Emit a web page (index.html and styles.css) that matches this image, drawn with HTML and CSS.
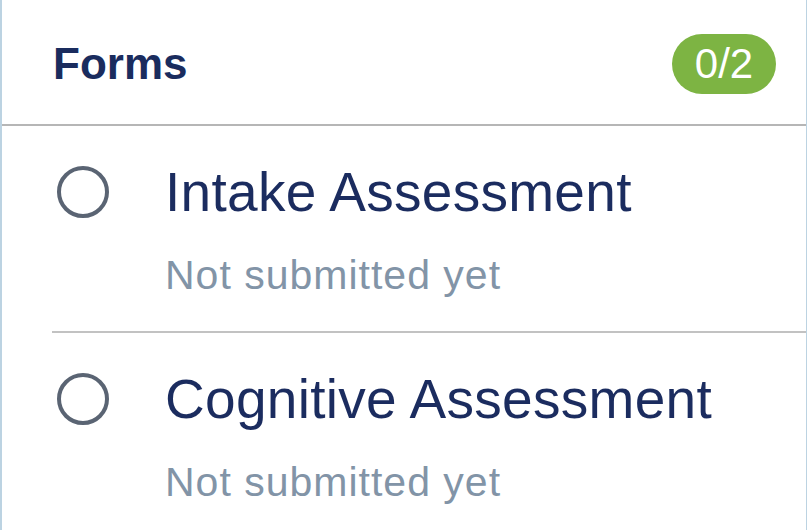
FILE: index.html
```html
<!DOCTYPE html>
<html lang="en">
<head>
<meta charset="utf-8">
<title>Forms</title>
<link rel="stylesheet" href="styles.css">
</head>
<body>
<div class="panel">
  <header class="panel-header">
    <h2 class="panel-title">Forms</h2>
    <span class="badge">0/2</span>
  </header>
  <ul class="form-list">
    <li class="form-item">
      <span class="status-icon" aria-hidden="true"></span>
      <div class="form-text">
        <div class="form-name">Intake Assessment</div>
        <div class="form-status">Not submitted yet</div>
      </div>
    </li>
    <li class="form-item">
      <span class="status-icon" aria-hidden="true"></span>
      <div class="form-text">
        <div class="form-name">Cognitive Assessment</div>
        <div class="form-status">Not submitted yet</div>
      </div>
    </li>
  </ul>
</div>
</body>
</html>
```
FILE: styles.css
```css
* { box-sizing: border-box; }

html, body {
  margin: 0;
  padding: 0;
  background: #ffffff;
  overflow: hidden;
}

body {
  font-family: "Liberation Sans", Arial, sans-serif;
  width: 807px;
  height: 530px;
}

.panel {
  width: 807px;
  min-height: 530px;
  border-left: 2px solid #bcd3e2;
  border-right: 1px solid #bcd3e2;
  background: #ffffff;
}

.panel-header {
  height: 126px;
  display: flex;
  align-items: center;
  justify-content: space-between;
  padding: 3px 30px 0 51px;
  border-bottom: 2px solid #b6b6b6;
}

.panel-title {
  margin: 0;
  font-size: 44px;
  line-height: 52px;
  font-weight: 700;
  color: #1a2c5e;
}

.badge {
  width: 104px;
  height: 60px;
  border-radius: 30px;
  background: #7db443;
  color: #ffffff;
  font-size: 42px;
  line-height: 60px;
  text-align: center;
  font-weight: 400;
}

.form-list {
  list-style: none;
  margin: 0;
  padding: 0;
}

.form-item {
  margin-left: 50px;
  display: flex;
  padding: 34px 0 32px 0;
  border-bottom: 2px solid #c2c2c2;
}

.status-icon {
  flex: 0 0 auto;
  width: 52px;
  height: 52px;
  margin: 6px 0 0 5px;
  border: 4px solid #5a6473;
  border-radius: 50%;
}

.form-text {
  margin-left: 56px;
  display: flex;
  flex-direction: column;
  gap: 27px;
}

.form-name {
  font-size: 55px;
  line-height: 64px;
  letter-spacing: 0.3px;
  color: #1b2c5f;
}

.form-status {
  font-size: 41px;
  line-height: 48px;
  letter-spacing: 1px;
  color: #8294a7;
}
```
